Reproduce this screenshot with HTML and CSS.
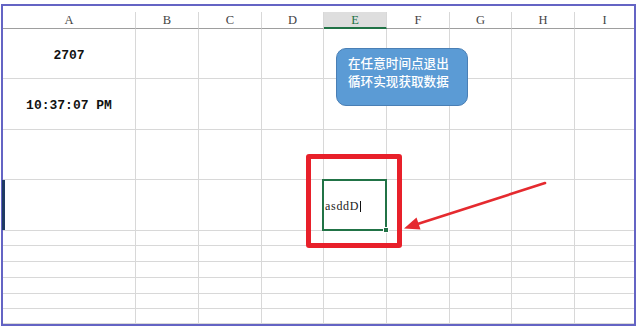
FILE: index.html
```html
<!DOCTYPE html>
<html>
<head>
<meta charset="utf-8">
<link rel="stylesheet" href="styles.css">
</head>
<body>
<div class="frame">
  <div class="sheet">
    <div class="hd">A</div><div class="hd">B</div><div class="hd">C</div><div class="hd">D</div><div class="hd hd-active">E</div><div class="hd">F</div><div class="hd">G</div><div class="hd">H</div><div class="hd last">I</div>
    <div class="c val">2707</div><div class="c"></div><div class="c"></div><div class="c"></div><div class="c"></div><div class="c"></div><div class="c"></div><div class="c"></div><div class="c last"></div>
    <div class="c val">10:37:07 PM</div><div class="c"></div><div class="c"></div><div class="c"></div><div class="c"></div><div class="c"></div><div class="c"></div><div class="c"></div><div class="c last"></div>
    <div class="c"></div><div class="c"></div><div class="c"></div><div class="c"></div><div class="c"></div><div class="c"></div><div class="c"></div><div class="c"></div><div class="c last"></div>
    <div class="c"></div><div class="c"></div><div class="c"></div><div class="c"></div><div class="c"></div><div class="c"></div><div class="c"></div><div class="c"></div><div class="c last"></div>
    <div class="c"></div><div class="c"></div><div class="c"></div><div class="c"></div><div class="c"></div><div class="c"></div><div class="c"></div><div class="c"></div><div class="c last"></div>
    <div class="c"></div><div class="c"></div><div class="c"></div><div class="c"></div><div class="c"></div><div class="c"></div><div class="c"></div><div class="c"></div><div class="c last"></div>
    <div class="c"></div><div class="c"></div><div class="c"></div><div class="c"></div><div class="c"></div><div class="c"></div><div class="c"></div><div class="c"></div><div class="c last"></div>
    <div class="c"></div><div class="c"></div><div class="c"></div><div class="c"></div><div class="c"></div><div class="c"></div><div class="c"></div><div class="c"></div><div class="c last"></div>
    <div class="c"></div><div class="c"></div><div class="c"></div><div class="c"></div><div class="c"></div><div class="c"></div><div class="c"></div><div class="c"></div><div class="c last"></div>
    <div class="c"></div><div class="c"></div><div class="c"></div><div class="c"></div><div class="c"></div><div class="c"></div><div class="c"></div><div class="c"></div><div class="c last"></div>
  </div>
  <div class="row-marker"></div>
  <div class="callout">在任意时间点退出<br>循环实现获取数据</div>
  <div class="red-box"></div>
  <div class="editor"><span class="edit-text">asddD</span><span class="caret"></span><span class="handle"></span></div>
</div>
<svg class="arrow" width="640" height="329" viewBox="0 0 640 329">
  <line x1="545" y1="183" x2="416" y2="224.5" stroke="#e52a2f" stroke-width="2.6" stroke-linecap="round"/>
  <polygon points="404,228.5 420.5,229.5 416.5,217.5" fill="#e52a2f"/>
</svg>
</body>
</html>
```
FILE: styles.css
```css
html, body {
  margin: 0;
  padding: 0;
  background: #ffffff;
}
body {
  width: 640px;
  height: 329px;
  overflow: hidden;
  position: relative;
}
.frame {
  position: relative;
  margin: 4px 0 0 1px;
  width: 631px;
  height: 312px;
  border: 2px solid #6464c4;
  padding-top: 6px;
  box-sizing: content-box;
  background: #fff;
}
.sheet {
  display: grid;
  grid-template-columns: 133px 63px 63px 62px 63px 63px 62px 63px 59px;
  grid-template-rows: 17px 50px 51px 50px 51px 15px 16px 16px 16px 15px 15px;
}
.sheet > div {
  box-sizing: border-box;
  border-right: 1px solid #d8d8d8;
  border-bottom: 1px solid #d8d8d8;
}
.sheet > div.last {
  border-right: none;
}
.hd {
  display: flex;
  align-items: center;
  justify-content: center;
  font-family: "Liberation Serif", serif;
  font-size: 12.5px;
  color: #444;
  border-bottom-color: #9e9e9e !important;
  padding-top: 1px;
}
.hd-active {
  background: #dedede;
  color: #217346;
  border-bottom: 2px solid #217346 !important;
}
.val {
  display: flex;
  align-items: center;
  justify-content: center;
  font-family: "Liberation Mono", monospace;
  font-weight: bold;
  font-size: 13px;
  color: #111;
  padding-top: 3px;
}
.row-marker {
  position: absolute;
  left: -1px;
  top: 174px;
  width: 3px;
  height: 50px;
  background: #1f3a64;
}
.callout {
  position: absolute;
  left: 333px;
  top: 42px;
  width: 132px;
  height: 58px;
  box-sizing: border-box;
  background: #5b9bd5;
  border: 1px solid #4a7fb5;
  border-radius: 10px;
  padding: 5px 0 0 11px;
  color: #ffffff;
  font-family: "Noto Sans CJK SC", sans-serif;
  font-weight: 500;
  font-size: 12.6px;
  line-height: 18px;
  white-space: nowrap;
}
.red-box {
  position: absolute;
  left: 303px;
  top: 148px;
  width: 96px;
  height: 94px;
  box-sizing: border-box;
  border: 5px solid #e8202a;
  border-radius: 3px;
}
.editor {
  position: absolute;
  left: 319px;
  top: 173px;
  width: 65px;
  height: 52px;
  box-sizing: border-box;
  border: 2px solid #217346;
  display: flex;
  align-items: center;
  padding: 3px 0 0 1px;
}
.edit-text {
  font-family: "Liberation Serif", serif;
  font-size: 12px;
  letter-spacing: 0.7px;
  color: #222;
}
.caret {
  display: inline-block;
  width: 1px;
  height: 11px;
  background: #111;
  margin-left: 1px;
}
.handle {
  position: absolute;
  right: -4px;
  bottom: -4px;
  width: 4px;
  height: 4px;
  background: #217346;
  border: 1px solid #fff;
}
.arrow {
  position: absolute;
  left: 0;
  top: 0;
  pointer-events: none;
}
```
